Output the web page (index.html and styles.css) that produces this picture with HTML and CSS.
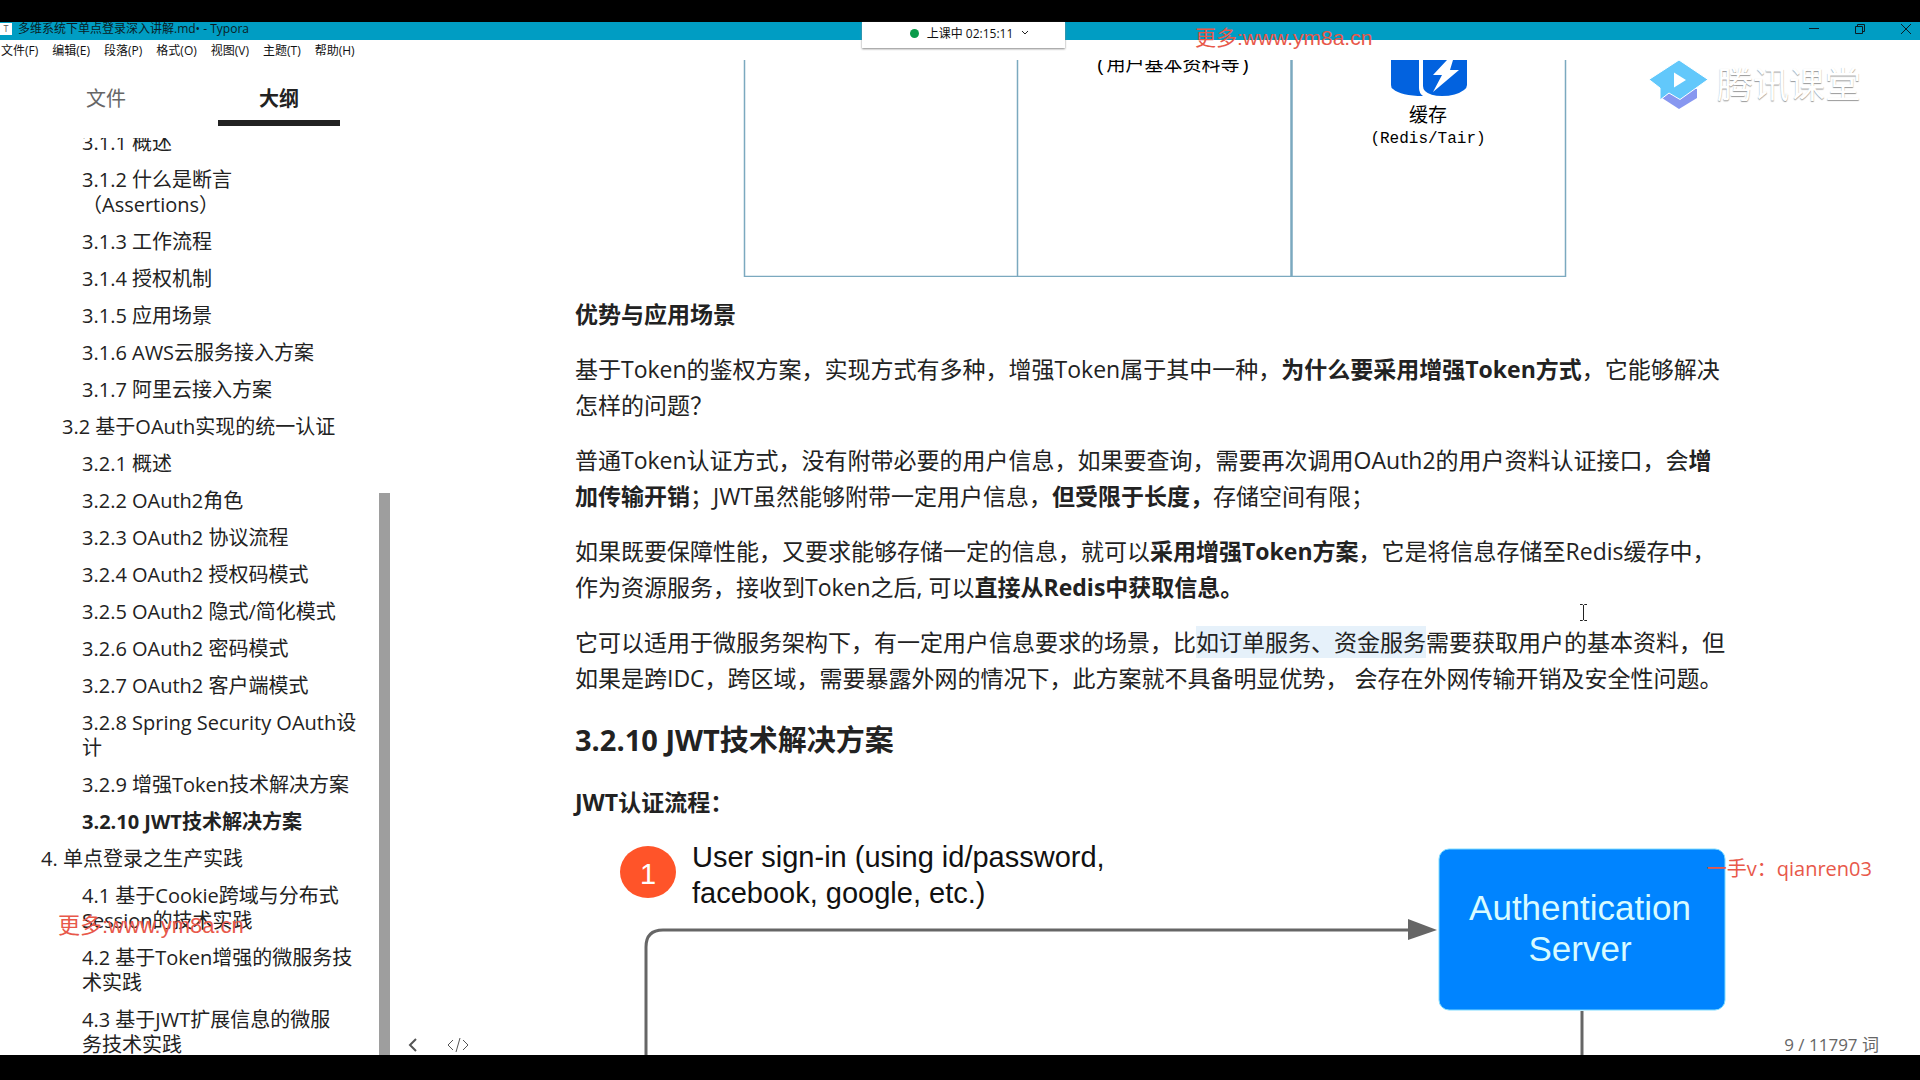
FILE: index.html
```
<!DOCTYPE html>
<html lang="zh-CN">
<head>
<meta charset="UTF-8">
<meta name="viewport" content="width=device-width, initial-scale=1.0">
<title>多维系统下单点登录深入讲解.md - Typora</title>
<link rel="stylesheet" href="styles.css">
</head>
<body>

<div class="window">
    <header class="titlebar">
        <span class="app-icon">T</span>
        <span class="title">多维系统下单点登录深入讲解.md• - Typora</span>
        <div class="controls">
            <button aria-label="最小化"><svg width="12" height="12" viewBox="0 0 12 12"><path d="M1 5.5h10"/></svg></button>
            <button aria-label="还原"><svg width="12" height="12" viewBox="0 0 12 12"><path d="M1.5 3.5h7v7h-7zM3.5 3.5v-2h7v7h-2"/></svg></button>
            <button aria-label="关闭"><svg width="12" height="12" viewBox="0 0 12 12"><path d="M1 1l10 10M11 1L1 11"/></svg></button>
        </div>
    </header>

    <nav class="menubar">
        <button>文件(F)</button>
        <button>编辑(E)</button>
        <button>段落(P)</button>
        <button>格式(O)</button>
        <button>视图(V)</button>
        <button>主题(T)</button>
        <button>帮助(H)</button>
    </nav>

    <div class="workspace">
        <aside class="sidebar">
            <div class="tabs">
                <button class="tab">文件</button>
                <button class="tab active">大纲</button>
            </div>
            <div class="outline-wrap">
                <ul class="outline">
                    <li class="l3"><a href="#">3.1.1 概述</a></li>
                    <li class="l3"><a href="#">3.1.2 什么是断言<br>（Assertions）</a></li>
                    <li class="l3"><a href="#">3.1.3 工作流程</a></li>
                    <li class="l3"><a href="#">3.1.4 授权机制</a></li>
                    <li class="l3"><a href="#">3.1.5 应用场景</a></li>
                    <li class="l3"><a href="#">3.1.6 AWS云服务接入方案</a></li>
                    <li class="l3"><a href="#">3.1.7 阿里云接入方案</a></li>
                    <li class="l2"><a href="#">3.2 基于OAuth实现的统一认证</a></li>
                    <li class="l3"><a href="#">3.2.1 概述</a></li>
                    <li class="l3"><a href="#">3.2.2 OAuth2角色</a></li>
                    <li class="l3"><a href="#">3.2.3 OAuth2 协议流程</a></li>
                    <li class="l3"><a href="#">3.2.4 OAuth2 授权码模式</a></li>
                    <li class="l3"><a href="#">3.2.5 OAuth2 隐式/简化模式</a></li>
                    <li class="l3"><a href="#">3.2.6 OAuth2 密码模式</a></li>
                    <li class="l3"><a href="#">3.2.7 OAuth2 客户端模式</a></li>
                    <li class="l3"><a href="#">3.2.8 Spring Security OAuth设<br>计</a></li>
                    <li class="l3"><a href="#">3.2.9 增强Token技术解决方案</a></li>
                    <li class="l3"><a href="#jwt" class="current">3.2.10 JWT技术解决方案</a></li>
                    <li class="l1"><a href="#">4. 单点登录之生产实践</a></li>
                    <li class="l3"><a href="#">4.1 基于Cookie跨域与分布式<br>Session的技术实践</a></li>
                    <li class="l3"><a href="#">4.2 基于Token增强的微服务技<br>术实践</a></li>
                    <li class="l3"><a href="#">4.3 基于JWT扩展信息的微服<br>务技术实践</a></li>
                </ul>
            </div>
            <div class="scroll-thumb"></div>
        </aside>

        <main class="editor">
            <article class="write">
                <svg class="figure" width="1160" height="217" viewBox="0 0 1160 217">
                    <g class="grid">
                        <path d="M169.500 0V216.500H990.500V0" stroke-width="1.500"/>
                        <path d="M442.500 0V216" stroke-width="1.500"/>
                        <path d="M716.500 0V216" stroke-width="2.500"/>
                    </g>
                    <text class="label" x="598" y="11" text-anchor="middle">(用户基本资料等)</text>
                    <path class="cache" d="M816 0h28v28q0 5 4 8q-22 0-30-7q-2-1-2-4z"/>
                    <path class="cache" d="M848 0h44v25q0 3-3 5q-8 6-22 6q-12 0-17-5q-2-2-2-5z"/>
                    <path fill="#fff" d="M872 0l-14 15h9l-9 17 26-22h-9l3-10z"/>
                    <text class="label" x="853" y="62" text-anchor="middle">缓存</text>
                    <text class="label small" x="853" y="83" text-anchor="middle">(Redis/Tair)</text>
                </svg>

                <p><strong>优势与应用场景</strong></p>
                <p>基于Token的鉴权方案，实现方式有多种，增强Token属于其中一种，<strong>为什么要采用增强Token方式</strong>，它能够解决<br>怎样的问题？</p>
                <p>普通Token认证方式，没有附带必要的用户信息，如果要查询，需要再次调用OAuth2的用户资料认证接口，会<strong>增<br>加传输开销</strong>；JWT虽然能够附带一定用户信息，<strong>但受限于长度，</strong>存储空间有限；</p>
                <p>如果既要保障性能，又要求能够存储一定的信息，就可以<strong>采用增强Token方案</strong>，它是将信息存储至Redis缓存中，<br>作为资源服务，接收到Token之后, 可以<strong>直接从Redis中获取信息。</strong></p>
                <p>它可以适用于微服务架构下，有一定用户信息要求的场景，比<mark>如订单服务、资金服务</mark>需要获取用户的基本资料，但<br>如果是跨IDC，跨区域，需要暴露外网的情况下，此方案就不具备明显优势， 会存在外网传输开销及安全性问题。</p>
                <h3 id="jwt">3.2.10 JWT技术解决方案</h3>
                <p><strong>JWT认证流程：</strong></p>

                <svg class="figure" width="1160" height="300" viewBox="0 0 1160 300">
                    <ellipse cx="73" cy="33" rx="28" ry="26" fill="#ff5429"/>
                    <text class="flow num" x="73" y="45" text-anchor="middle">1</text>
                    <text class="flow" x="117" y="28">User sign-in (using id/password,</text>
                    <text class="flow" x="117" y="64">facebook, google, etc.)</text>
                    <path class="wire" d="M71 300V108q0-17 17-17H834"/>
                    <path d="M833 80l29 11-29 10z" fill="#666"/>
                    <rect x="864" y="10" width="286" height="161" rx="10" fill="#0084ff" stroke="#7fdcff"/>
                    <text class="flow server" x="1005" y="81" text-anchor="middle">Authentication</text>
                    <text class="flow server" x="1005" y="122" text-anchor="middle">Server</text>
                    <path class="wire" d="M1007 172V300"/>
                </svg>
            </article>

            <footer class="status">
                <button aria-label="隐藏侧边栏"><svg width="10" height="14" viewBox="0 0 10 14"><path d="M8 1L2 7l6 6" stroke-width="2"/></svg></button>
                <button aria-label="源代码模式"><svg width="22" height="14" viewBox="0 0 22 14"><path d="M6 2L1 7l5 5M16 2l5 5-5 5M13 0L9 14"/></svg></button>
                <span class="count">9 / 11797 词</span>
            </footer>
        </main>
    </div>
</div>

<button class="class-timer">
    <span class="dot"></span>
    上课中 02:15:11
    <svg width="8" height="6" viewBox="0 0 8 6"><path d="M1 1l3 3 3-3"/></svg>
</button>

<div class="brand">
    <svg width="60" height="50" viewBox="0 0 60 50">
        <path d="M13 38L30 26l18 3v9L30 49z" fill="#8797f0"/>
        <path d="M30 0l29 19.500L31 39.500 20 33l-9 7V28L0 19.500z" fill="#62c8fb" stroke="#fff"/>
        <path d="M25 12.500v15l12-7.500z" fill="#fff"/>
    </svg>
    <span>腾讯课堂</span>
</div>

<div class="watermark wm-top">更多:www.ym8a.cn</div>
<div class="watermark wm-left">更多:www.ym8a.cn</div>
<div class="watermark wm-right">一手v：qianren03</div>

<svg class="cursor" width="9" height="17" viewBox="0 0 9 17"><path d="M1 .500h2.500l1 1 1-1H8M4.500 1v15M1 16.500h2.500l1-1 1 1H8"/></svg>

</body>
</html>
```
FILE: styles.css
```
* {
    box-sizing: border-box;
}
body {
    margin: 0;
    padding: 22px 0 25px;
    height: 100vh;
    background: #000;
    color: #222;
    font-family: "Open Sans", "Noto Sans CJK SC", sans-serif;
    overflow: hidden;
    position: relative;
}
button {
    font-family: inherit;
    background: none;
    border: none;
    padding: 0;
    color: inherit;
}
svg {
    display: block;
    fill: none;
}
.window {
    height: 100%;
    display: flex;
    flex-direction: column;
    background: #fff;
    overflow: hidden;
}

/* title bar and menu */
.titlebar {
    flex: none;
    height: 18px;
    display: flex;
    align-items: center;
    gap: 6px;
    margin-right: -9px;
    padding-bottom: 4px;
    background: #009dc3;
    color: #0b1c24;
    font-size: 12px;
    line-height: 14px;
}
.app-icon {
    width: 12px;
    height: 12px;
    background: #fff;
    color: #555;
    font-size: 9px;
    line-height: 12px;
    text-align: center;
}
.controls {
    display: flex;
    margin-left: auto;
}
.controls button {
    width: 46px;
    height: 12px;
    display: flex;
    justify-content: center;
}
.controls svg {
    stroke: #0b1c24;
}
.menubar {
    flex: none;
    height: 20px;
    display: flex;
    gap: 14px;
    padding: 2px 1px 0;
}
.menubar button {
    font-size: 12px;
    line-height: 18px;
    color: #111;
}

.workspace {
    flex: 1;
    min-height: 0;
    display: flex;
}

/* sidebar */
.sidebar {
    flex: none;
    width: 390px;
    display: flex;
    flex-direction: column;
    position: relative;
}
.tabs {
    flex: none;
    display: flex;
    gap: 51px;
    padding: 11px 0 12px 45px;
}
.tab {
    width: 122px;
    height: 55px;
    padding-top: 4px;
    border-bottom: 6px solid transparent;
    font-size: 20px;
    color: #666;
}
.tab.active {
    border-color: #222;
    color: #222;
    font-weight: bold;
}
.outline-wrap {
    flex: 1;
    min-height: 0;
    overflow: hidden;
}
.outline {
    list-style: none;
    margin: -14px 0 0;
    padding: 0;
    font-size: 20px;
    line-height: 25px;
    white-space: nowrap;
}
.outline li {
    padding: 6px 0;
}
.outline a {
    display: block;
    color: #222;
    text-decoration: none;
}
.outline .l1 {
    padding-left: 41px;
}
.outline .l2 {
    padding-left: 62px;
}
.outline .l3 {
    padding-left: 82px;
}
.outline .current {
    font-weight: bold;
}
.scroll-thumb {
    position: absolute;
    right: 0;
    bottom: 0;
    width: 11px;
    height: 562px;
    background: #9e9e9e;
}

/* document */
.editor {
    flex: 1;
    min-width: 0;
    overflow: hidden;
    position: relative;
}
.write {
    max-width: 1160px;
    margin: 0 auto;
    font-size: 23px;
    line-height: 36px;
    white-space: nowrap;
}
.write p {
    margin: 19px 0;
}
.write h3 {
    margin: 25px 0;
    font-size: 29px;
    line-height: 38px;
}
mark {
    background: #e6f1fa;
    color: inherit;
}
.figure .grid {
    stroke: #7ba9bf;
}
.figure .cache {
    fill: #0262df;
}
.label {
    font-family: "Liberation Mono", "Noto Sans CJK SC", monospace;
    font-size: 19px;
    fill: #000;
}
.label.small {
    font-size: 16px;
}
.flow {
    font-family: "Liberation Sans", Arial, sans-serif;
    font-size: 29px;
    fill: #111;
}
.flow.num {
    fill: #fff;
}
.flow.server {
    font-size: 35px;
    fill: #d8fbff;
}
.wire {
    stroke: #666;
    stroke-width: 3;
}

.status {
    position: absolute;
    left: 0;
    right: 0;
    bottom: 0;
    height: 20px;
    padding: 0 41px 0 18px;
    display: flex;
    align-items: center;
    gap: 29px;
    color: #666;
}
.status svg {
    stroke: #555;
}
.count {
    margin-left: auto;
    font-size: 17px;
    line-height: 20px;
}

/* overlays */
.class-timer {
    position: absolute;
    top: 22px;
    left: 862px;
    width: 203px;
    height: 26px;
    padding: 0 0 4px 12px;
    display: flex;
    align-items: center;
    justify-content: center;
    gap: 8px;
    background: #fff;
    box-shadow: 0 1px 2px #888;
    font-size: 12px;
    color: #111;
}
.class-timer svg {
    stroke: #222;
}
.dot {
    width: 9px;
    height: 9px;
    border-radius: 50%;
    background: #0a9b4a;
}
.brand {
    position: absolute;
    top: 60px;
    right: 59px;
    display: flex;
    align-items: center;
    gap: 8px;
    color: #fff;
    font-size: 36px;
    line-height: 50px;
    text-shadow: 0 1px 1px #999;
}
.watermark {
    position: absolute;
    color: #e8584a;
    white-space: nowrap;
    line-height: 28px;
    font-family: "Liberation Sans", "Noto Sans CJK SC", sans-serif;
}
.wm-top {
    top: 24px;
    left: 1195px;
    font-size: 21px;
}
.wm-left {
    top: 912px;
    left: 58px;
    font-size: 22px;
}
.wm-right {
    top: 855px;
    right: 48px;
    font-size: 20px;
    font-family: "Open Sans", "Noto Sans CJK SC", sans-serif;
}
.cursor {
    position: absolute;
    left: 1579px;
    top: 604px;
    stroke: #222;
}
```
